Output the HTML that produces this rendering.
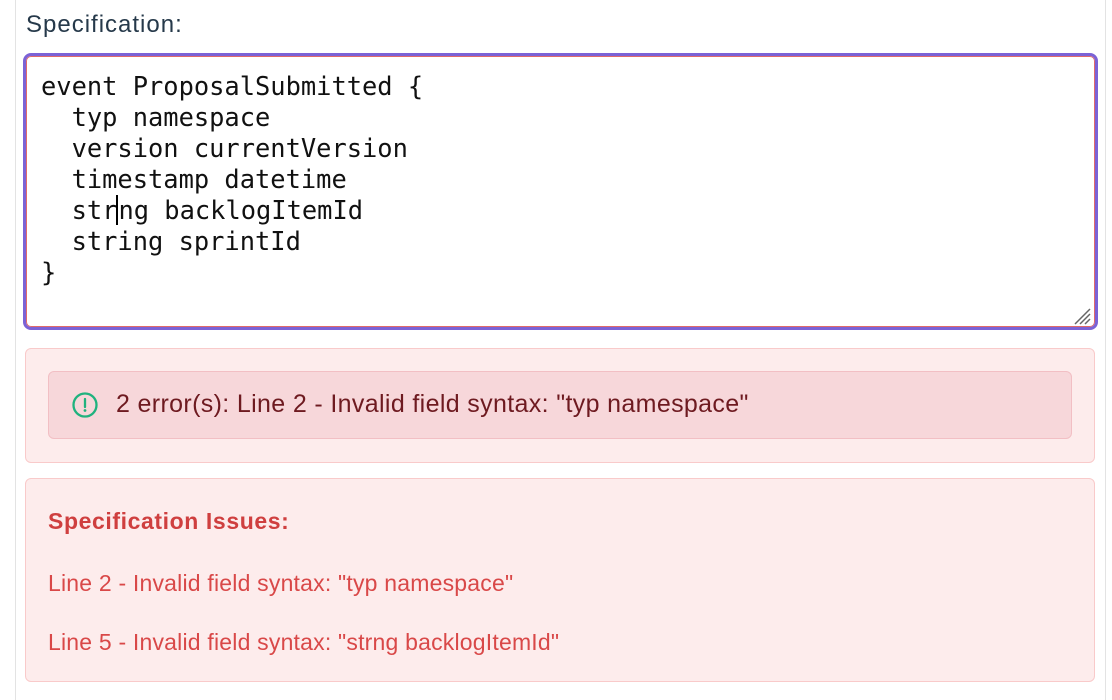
<!DOCTYPE html>
<html><head><meta charset="utf-8"><style>
html,body{margin:0;padding:0;width:1112px;height:700px;overflow:hidden;background:#fff;font-family:"Liberation Sans","DejaVu Sans",sans-serif;}
.vl{position:absolute;top:0;bottom:0;left:15px;width:1px;background:#e3e3e3}
.vr{position:absolute;top:0;bottom:0;left:1105px;width:1px;background:#e3e3e3}
.label{position:absolute;left:26px;top:11px;font-size:24px;letter-spacing:1px;color:#26394a}
.ta{position:absolute;left:23px;top:53px;width:1069px;height:271px;border:3px solid #7b62d6;border-radius:8px;box-shadow:inset 0 0 0 1px #e06a6a;}
.code{position:absolute;left:41px;top:71px;font-family:"DejaVu Sans Mono","Liberation Mono",monospace;font-size:25.4px;line-height:31px;color:#111;white-space:pre}
.grip{position:absolute;left:1072px;top:306px}
.b1{position:absolute;left:25px;top:348px;width:1068px;height:113px;background:#fdecec;border:1px solid #f9caca;border-radius:6px}
.a1{position:absolute;left:22px;top:22px;width:1022px;height:66px;background:#f7d7da;border:1px solid #f2bfc4;border-radius:6px}
.a1 .t{position:absolute;left:67px;top:18px;font-size:25px;letter-spacing:0.35px;color:#6e1a20;white-space:nowrap}
.a1 svg{position:absolute;left:22px;top:19px}
.b2{position:absolute;left:25px;top:478px;width:1068px;height:202px;background:#fdecec;border:1px solid #f9caca;border-radius:6px;color:#d94848}
.b2 .h{position:absolute;left:22px;top:29px;font-size:23px;letter-spacing:0.6px;font-weight:bold;color:#cf3f3f}
.b2 .l{position:absolute;left:22px;font-size:23px;letter-spacing:0.2px;white-space:nowrap}
</style></head><body>
<div class="vl"></div><div class="vr"></div>
<div class="label">Specification:</div>
<div class="ta"></div>
<div class="code">event ProposalSubmitted {
  typ namespace
  version currentVersion
  timestamp datetime
  str<span style="border-left:2px solid #000;margin-left:-1px"></span>ng backlogItemId
  string sprintId
}</div>
<svg class="grip" width="20" height="20" viewBox="0 0 20 20"><g stroke="#666" stroke-width="1.5"><line x1="3" y1="18" x2="18" y2="3"/><line x1="8" y1="18" x2="18" y2="8"/><line x1="13" y1="18" x2="18" y2="13"/></g></svg>
<div class="b1"><div class="a1"><svg width="28" height="28" viewBox="0 0 28 28"><circle cx="14" cy="14" r="11.5" fill="none" stroke="#20b27e" stroke-width="2.3"/><line x1="14" y1="8" x2="14" y2="16" stroke="#20b27e" stroke-width="2.3" stroke-linecap="round"/><circle cx="14" cy="19.5" r="1.4" fill="#20b27e"/></svg><div class="t">2 error(s): Line 2 - Invalid field syntax: "typ namespace"</div></div></div>
<div class="b2"><div class="h">Specification Issues:</div>
<div class="l" style="top:91px">Line 2 - Invalid field syntax: "typ namespace"</div>
<div class="l" style="top:150px">Line 5 - Invalid field syntax: "strng backlogItemId"</div></div>
</body></html>
